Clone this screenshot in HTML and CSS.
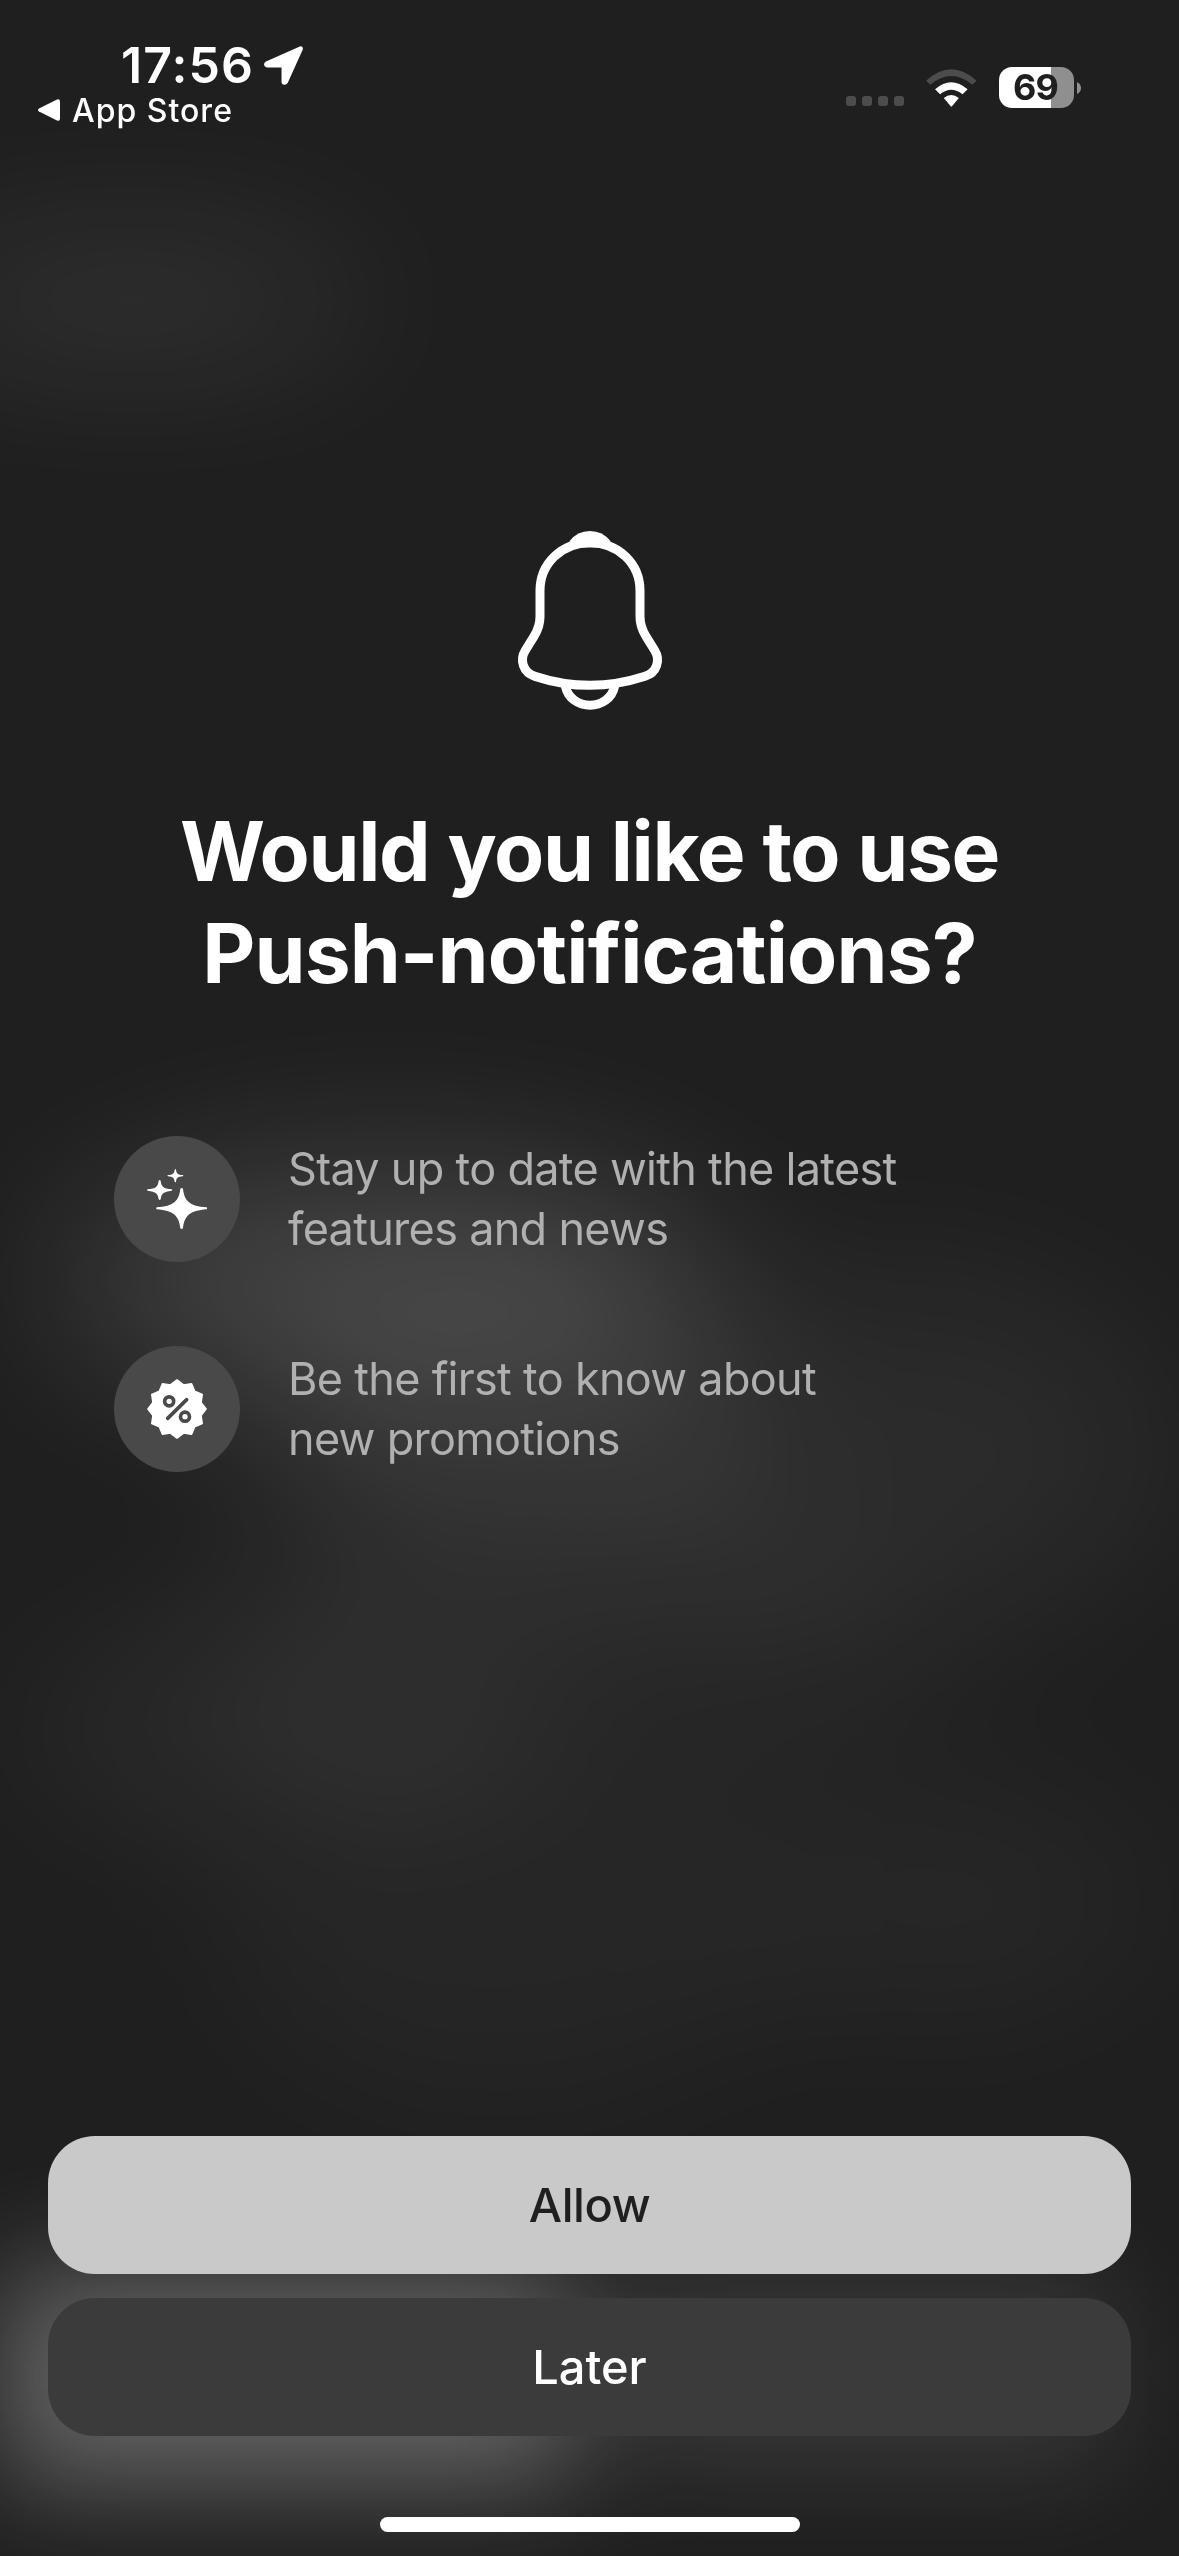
FILE: index.html
```
<!DOCTYPE html>
<html lang="en">
<head>
    <meta charset="UTF-8">
    <meta name="viewport" content="width=device-width, initial-scale=1.0">
    <title>Push-notifications</title>
    <link rel="stylesheet" href="styles.css">
</head>
<body>
    <svg class="backdrop" viewBox="0 0 1179 2556" aria-hidden="true">
        <defs>
            <filter id="soft" x="-100%" y="-100%" width="300%" height="300%"><feGaussianBlur stdDeviation="80"/></filter>
            <filter id="glow" x="-50%" y="-100%" width="200%" height="300%"><feGaussianBlur stdDeviation="56"/></filter>
        </defs>
        <g fill="#fff" filter="url(#soft)">
            <ellipse cx="130" cy="300" rx="240" ry="45" opacity=".13"/>
            <ellipse cx="390" cy="1280" rx="330" ry="115" opacity=".165"/>
            <ellipse cx="510" cy="1430" rx="240" ry="150" opacity=".08"/>
            <ellipse cx="900" cy="1450" rx="270" ry="180" opacity=".055"/>
            <ellipse cx="560" cy="1640" rx="360" ry="140" opacity=".04"/>
            <ellipse cx="270" cy="1730" rx="250" ry="90" opacity=".055"/>
            <ellipse cx="500" cy="1930" rx="280" ry="180" opacity=".03"/>
            <ellipse cx="940" cy="1900" rx="220" ry="120" opacity=".035"/>
        </g>
        <g fill="#fff" filter="url(#glow)">
            <rect x="0" y="2270" width="575" height="215" opacity=".31"/>
            <rect x="620" y="2275" width="490" height="190" opacity=".12"/>
        </g>
    </svg>

    <div class="screen">
        <header class="status-bar">
            <div class="status-left">
                <div class="clock">
                    <span class="time">17:56</span>
                    <svg class="location" viewBox="792 77 118 118"><path d="M902 78Q912 78 909 88L864 188Q860 195 853 194Q845 193 845 185V142H801Q793 141 792 134Q792 127 798 124Z"/></svg>
                </div>
                <div class="back">
                    <svg class="back-arrow" viewBox="0 0 22 22"><path d="M1 9.500 19 .5Q22-.5 22 2.500V19.500Q22 22.500 19 21.500L1 12.500Q-1 11 1 9.500Z"/></svg>
                    <span>App Store</span>
                </div>
            </div>
            <div class="status-right">
                <div class="cell"><i></i><i></i><i></i><i></i></div>
                <svg class="wifi" viewBox="319 86 152 113">
                    <path class="dim" d="M320 120Q394 53 469 120Q470 121 469 122L457 133Q394 81 332 133L320 122Z"/>
                    <path d="M346 146Q394 104 443 146L428 161Q394 134 361 161Z"/>
                    <path d="M372 172Q394 154 417 172L397 196Q394 199 392 196Z"/>
                </svg>
                <div class="battery">
                    <div class="battery-body">69</div>
                    <svg class="battery-tip" viewBox="0 0 4 12"><path d="M0 0Q4 2 4 6T0 12Z"/></svg>
                </div>
            </div>
        </header>

        <main class="content">
            <svg class="bell" viewBox="0 0 600 660">
                <path class="line" d="M300 98C215 98 150 160 150 242V320C150 345 143 361 132 379L106 421C88 450 99 488 135 499Q300 553 465 499C501 488 512 450 494 421L468 379C457 361 450 345 450 320V242C450 160 385 98 300 98Z"/>
                <path class="line" d="M226 528C242 605 358 605 374 528"/>
                <path class="cap" d="M238 94Q262 63 300 63T362 94L330 112H270Z"/>
            </svg>

            <h1>Would you like to use<br><span>Push-notifications?</span></h1>

            <ul class="features">
                <li>
                    <span class="badge">
                        <svg viewBox="141 147 180 180">
                            <path d="M241 206Q245 202 249 206C253 243 269 258 320 262Q323 265 320 268C269 272 253 288 249 325Q245 329 241 325C237 288 221 272 170 268Q167 265 170 262C221 258 237 243 241 206Z"/>
                            <path d="M176 182Q179 178 182 182C184 199 190 206 215 208Q219 210 215 212C190 215 184 221 182 238Q179 242 176 238C174 221 168 215 143 212Q139 210 143 208C168 206 174 199 176 182Z"/>
                            <path d="M224 149Q226 145 228 149C229 160 234 164 248 165Q252 167 248 169C234 170 229 174 228 185Q226 189 224 185C223 174 218 170 204 169Q201 167 204 165C218 164 223 160 224 149Z"/>
                        </svg>
                    </span>
                    <p>Stay up to date with the latest<br>features and news</p>
                </li>
                <li>
                    <span class="badge">
                        <svg viewBox="-90 -90 180 180">
                            <path class="seal" d="M87 0 72 19.500 75.500 43.500 53 53 43.500 75.500 19.500 72 0 87-19.500 72-43.500 75.500-53 53-75.500 43.500-72 19.500-87 0-72-19.500-75.500-43.500-53-53-43.500-75.500-19.500-72 0-87 19.500-72 43.500-75.500 53-53 75.500-43.500 72-19.500Z"/>
                            <g class="percent">
                                <circle cx="-23.500" cy="-23" r="13.500"/>
                                <circle cx="24" cy="23" r="13.500"/>
                                <path d="M29-28-28 28"/>
                            </g>
                        </svg>
                    </span>
                    <p>Be the first to know about<br>new promotions</p>
                </li>
            </ul>
        </main>

        <footer class="actions">
            <button class="btn btn-allow">Allow</button>
            <button class="btn btn-later">Later</button>
            <div class="home-indicator"></div>
        </footer>
    </div>
</body>
</html>
```
FILE: styles.css
```
:root {
    --bg: #1f1f1f;
    --circle: #494949;
    --muted: #b0b0b0;
}

* {
    box-sizing: border-box;
    font-family: Inter, 'Liberation Sans', sans-serif;
}

body {
    background: var(--bg);
    color: white;
    margin: 0;
}

svg {
    display: block;
    fill: white;
    flex: none;
}

.backdrop {
    position: absolute;
    top: 0;
    left: 0;
    width: 1179px;
    height: 2556px;
}

.screen {
    position: relative;
    display: flex;
    flex-direction: column;
    width: 1179px;
    height: 2556px;
    overflow: hidden;
}

/* status bar */
.status-bar {
    display: flex;
    justify-content: space-between;
    height: 177px;
    padding: 40px 98px 0 38px;
}

.clock {
    display: flex;
    align-items: center;
    height: 51px;
    padding-left: 83px;
}

.time {
    width: 143px;
    font-size: 50px;
    font-weight: 600;
    letter-spacing: 1.1px;
    line-height: 51px;
}

.location {
    width: 39px;
    height: 39px;
}

.back {
    display: flex;
    align-items: center;
    gap: 12px;
    height: 38px;
    font-size: 32px;
    font-weight: 500;
    letter-spacing: 1px;
}

.back-arrow {
    width: 22px;
    height: 22px;
}

.status-right {
    display: flex;
    padding-top: 27px;
}

.cell {
    display: flex;
    gap: 6px;
    padding-top: 29px;
    margin-right: 22px;
}

.cell i {
    width: 10px;
    height: 10px;
    border-radius: 3px;
    background: #4c4c4c;
}

.wifi {
    width: 51px;
    height: 38px;
    margin: 2px 22px 0 0;
}

.wifi .dim {
    fill: #4c4c4c;
}

.battery {
    display: flex;
    align-items: center;
    gap: 3px;
    height: 41px;
}

.battery-body {
    width: 75px;
    height: 41px;
    padding-left: 14px;
    border-radius: 13px;
    background: linear-gradient(90deg, white 52px, #8f8f8f 52px);
    color: var(--bg);
    font-size: 36px;
    font-weight: 700;
    letter-spacing: -0.8px;
    line-height: 41px;
}

.battery-tip {
    width: 4px;
    height: 12px;
    fill: #8f8f8f;
}

/* content */
.content {
    flex: 1;
    padding-top: 333px;
}

.bell {
    width: 200px;
    height: 220px;
    margin: 0 auto;
}

.bell .line {
    fill: none;
    stroke: white;
    stroke-width: 27;
}

h1 {
    margin: 71px 0 0;
    text-align: center;
    font-size: 82px;
    font-weight: 700;
    letter-spacing: -1.35px;
    line-height: 102px;
}

h1 span {
    letter-spacing: -0.85px;
}

.features {
    display: grid;
    gap: 84px;
    margin: 131px 0 0;
    padding: 0 114px;
    list-style: none;
}

.features li {
    display: flex;
    align-items: center;
    gap: 48px;
    height: 126px;
}

.features p {
    margin: 0;
    color: var(--muted);
    font-size: 45px;
    letter-spacing: -0.7px;
    line-height: 60px;
}

.badge {
    display: grid;
    place-items: center;
    width: 126px;
    height: 126px;
    border-radius: 50%;
    background: var(--circle);
}

.badge svg {
    width: 60px;
    height: 60px;
}

.seal {
    stroke: white;
    stroke-width: 5;
    stroke-linejoin: round;
}

.percent {
    fill: none;
    stroke: var(--circle);
    stroke-width: 11;
    stroke-linecap: round;
}

/* bottom buttons */
.actions {
    display: flex;
    flex-direction: column;
    gap: 24px;
    padding: 0 48px 24px;
}

.btn {
    height: 138px;
    padding: 0 0 2px;
    border: none;
    border-radius: 47px;
    font-size: 47px;
    font-weight: 500;
    letter-spacing: -0.4px;
}

.btn-allow {
    background: #c9c9c9;
    color: var(--bg);
}

.btn-later {
    background: #3b3b3b;
    color: white;
    letter-spacing: 0;
}

.home-indicator {
    width: 420px;
    height: 15px;
    margin: 57px auto 0;
    border-radius: 8px;
    background: white;
}
```
